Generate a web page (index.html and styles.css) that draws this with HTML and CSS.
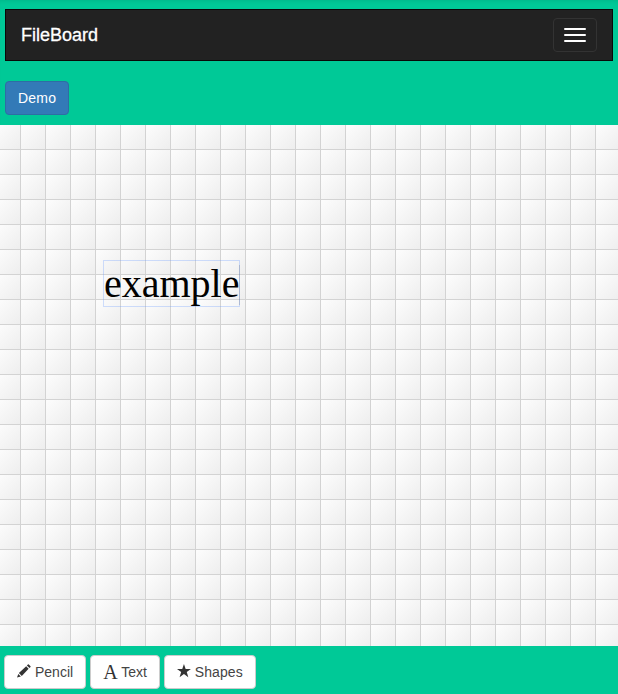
FILE: index.html
```html
<!DOCTYPE html>
<html lang="en">
<head>
<meta charset="utf-8">
<title>FileBoard</title>
<link rel="stylesheet" href="styles.css">
</head>
<body>
<header class="header">
  <nav class="navbar">
    <a class="brand">FileBoard</a>
    <button class="toggle" aria-label="Menu"><span class="bar"></span><span class="bar"></span><span class="bar"></span></button>
  </nav>
  <button class="btn btn-primary">Demo</button>
</header>
<main class="board">
  <div class="text-object">example<span class="caret"></span></div>
</main>
<footer class="toolbar">
  <button class="btn btn-default">
    <svg class="icon" viewBox="0 0 14 14"><path d="M0 13.6 1.3 9.9 3.9 12.5ZM1.9 9 9.2 2.3 11.6 4.7 4.8 11.9ZM9.9 1.5 10.9.5Q11.3.1 11.8.5L13.5 2.2Q13.9 2.7 13.5 3.1L12.5 4.1Z"/></svg>
    <span>Pencil</span>
  </button>
  <button class="btn btn-default">
    <span class="letter">A</span>
    <span>Text</span>
  </button>
  <button class="btn btn-default btn-shapes">
    <svg class="icon" viewBox="0 0 14 14"><path d="M7 0 8.7 5H14L9.8 8.1 11.4 13.2 7 10.1 2.6 13.2 4.2 8.1 0 5H5.3Z"/></svg>
    <span>Shapes</span>
  </button>
</footer>
</body>
</html>
```
FILE: styles.css
```css
* { box-sizing: border-box; }
body {
  margin: 0;
  height: 694px;
  display: flex;
  flex-direction: column;
  overflow: hidden;
  background: #00c997;
  font: 14px/20px "Liberation Sans", Arial, sans-serif;
}
.header {
  height: 125px;
  padding: 9px 5px 0;
  box-shadow: inset 0 4px 4px -3px rgba(0, 0, 0, .1);
}
.navbar {
  display: flex;
  align-items: center;
  justify-content: space-between;
  height: 52px;
  margin-bottom: 20px;
  padding: 0 15px;
  background: #222;
  border: 1px solid #080808;
}
.brand {
  color: #fff;
  font-size: 18px;
  -webkit-text-stroke: .3px #fff;
}
.toggle {
  display: flex;
  flex-direction: column;
  gap: 4px;
  width: 44px;
  height: 34px;
  padding: 9px 10px;
  background: transparent;
  border: 1px solid #333;
  border-radius: 4px;
}
.bar {
  width: 22px;
  height: 2px;
  background: #fff;
  border-radius: 1px;
}
.btn {
  display: inline-flex;
  align-items: center;
  height: 34px;
  padding: 0 12px;
  border: 1px solid #ccc;
  border-radius: 4px;
  font: inherit;
  white-space: nowrap;
}
.btn-primary {
  width: 64px;
  letter-spacing: .2px;
  color: #fff;
  background: #337ab7;
  border-color: #2e6da4;
}
.btn-default {
  gap: 4px;
  color: #444;
  background: #fff;
}
.btn-shapes {
  width: 92px;
  letter-spacing: .1px;
}
.board {
  height: 521px;
  padding: 135px 0 0 103px;
  background:
    linear-gradient(to right, transparent 24px, #d3d3d3 24px) -4px 0 / 25px 25px,
    linear-gradient(to bottom, transparent 24px, #d3d3d3 24px) -4px 0 / 25px 25px,
    linear-gradient(135deg, #fdfdfd, #ededed) -4px 0 / 25px 25px;
}
.text-object {
  position: relative;
  width: 137px;
  height: 47px;
  border: 1px solid rgba(102, 153, 255, .3);
  color: #000;
  font: 40px/46px "Liberation Serif", "Times New Roman", serif;
}
.caret {
  position: absolute;
  top: 4px;
  right: -1px;
  width: 1px;
  height: 40px;
  background: rgba(0, 0, 0, .15);
}
.toolbar {
  display: flex;
  gap: 4px;
  height: 48px;
  padding: 9px 4px 0;
}
.icon {
  width: 14px;
  height: 14px;
  margin-bottom: 2px;
  fill: #333;
}
.letter {
  width: 14px;
  margin-bottom: 1px;
  color: #333;
  font: 20px/20px "Liberation Serif", serif;
}
```
